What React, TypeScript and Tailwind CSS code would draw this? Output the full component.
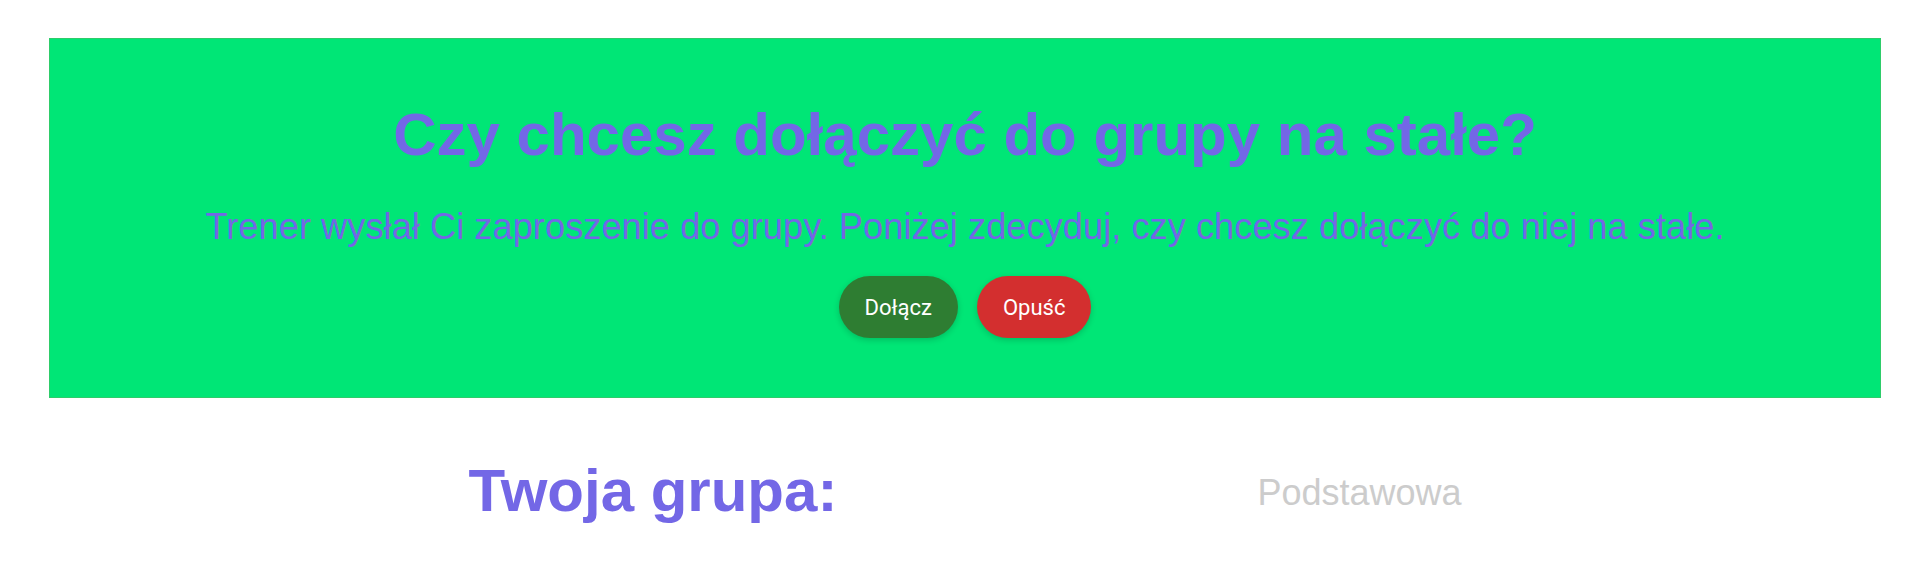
const App = () => {
  return (
    <div className="min-h-[570px] bg-white pt-[38px]" style={{ fontFamily: '"Liberation Sans", Arial, sans-serif' }}>
      <div className="ml-[49px] mr-[39px]">
        <section className="flex flex-col items-center border border-[#2ecc6a] bg-[#00e676] pt-[61px] pb-[59px]">
          <h1 className="mb-[37px] text-[60px] leading-[normal] font-bold text-[#7367e6]">
            Czy chcesz dołączyć do grupy na stałe?
          </h1>
          <p className="mb-[28px] text-[36.3px] leading-[normal] text-[#7367e6]">
            Trener wysłał Ci zaproszenie do grupy. Poniżej zdecyduj, czy chcesz dołączyć do niej na stałe.
          </p>
          <div className="flex gap-[19px] font-['Roboto',sans-serif]">
            <button className="h-[62px] rounded-full bg-[#2e7d32] px-[26px] text-[22px] text-white shadow-[0_2px_6px_rgba(0,0,0,0.18)]">
              Dołącz
            </button>
            <button className="h-[62px] rounded-full bg-[#d32f2f] px-[26px] text-[22px] text-white shadow-[0_2px_6px_rgba(0,0,0,0.18)]">
              Opuść
            </button>
          </div>
        </section>

        <div className="mt-[58px] flex items-center justify-center gap-[420px]">
          <h2 className="text-[60px] leading-[normal] font-bold text-[#7367e6]">Twoja grupa:</h2>
          <span className="mt-[4px] text-[36px] leading-[normal] text-[#cccccc]">Podstawowa</span>
        </div>
      </div>
    </div>
  );
};

export default App;
